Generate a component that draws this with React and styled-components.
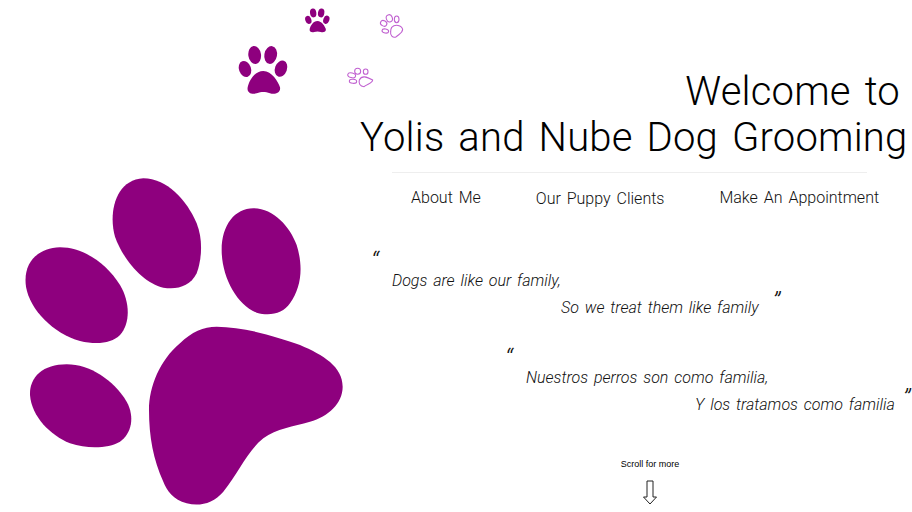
import React from "react";
import styled, { createGlobalStyle } from "styled-components";

const Global = createGlobalStyle`
  html, body { margin: 0; padding: 0; background: #fff; }
  body { font-family: "Roboto", "Liberation Sans", Arial, sans-serif; font-weight: 300; color: #000; }
`;

const Page = styled.div`
  position: relative;
  width: 912px;
  height: 512px;
  overflow: hidden;
  background: #fff;
`;

const PawLayer = styled.svg`
  position: absolute;
  inset: 0;
  width: 912px;
  height: 512px;
`;

const Content = styled.main`
  display: flex;
  flex-direction: column;
  width: 552px;
  margin-left: 360px;
  padding-top: 69px;
`;

const Title = styled.h1`
  margin: 0;
  padding-right: 12px;
  text-align: right;
  font-size: 40px;
  line-height: 46px;
  font-weight: 300;
  letter-spacing: 0.2px;
  word-spacing: 4px;
  white-space: nowrap;
`;

const Rule = styled.hr`
  width: 475px;
  height: 1px;
  margin: 11px 0 0 32px;
  border: 0;
  background: #eee;
`;

const Nav = styled.nav`
  display: flex;
  gap: 55px;
  margin: 15px 0 0 51px;
  font-size: 16px;
  line-height: 19px;
  color: #111;
  word-spacing: 2px;
`;

const NavLink = styled.a`
  transform: translateY(${(p) => (p.$low ? "1px" : "0")});
`;

const Quote = styled.blockquote`
  margin: ${(p) => p.$top}px 0 0 ${(p) => p.$left}px;
  font-style: italic;
  font-size: 16px;
  line-height: 26px;
  color: #111;
  word-spacing: 2px;
`;

const Mark = styled.span`
  display: ${(p) => (p.$open ? "block" : "inline")};
  font-size: 26px;
  line-height: ${(p) => (p.$open ? "14px" : "14px")};
  height: ${(p) => (p.$open ? "14px" : "auto")};
  margin-left: ${(p) => (p.$open ? "0" : "8px")};
  vertical-align: 3px;
`;

const Line = styled.div`
  padding-left: ${(p) => p.$indent}px;
  white-space: nowrap;
`;

const Scroll = styled.div`
  display: flex;
  flex-direction: column;
  align-items: center;
  width: 58px;
  margin: 41px 0 0 261px;
  font-family: "Liberation Sans", Arial, sans-serif;
  font-weight: 400;
  font-size: 9px;
  line-height: 11px;
  white-space: nowrap;
`;

const Arrow = styled.svg`
  width: 16px;
  height: 26px;
  margin-top: 10px;
`;

function Toes({ children }) {
  return children;
}

const solid = (
  <>
    <ellipse cx="104" cy="165" rx="19" ry="27" transform="rotate(-8 104 165)" />
    <ellipse cx="152" cy="165" rx="19" ry="27" transform="rotate(10 152 165)" />
    <ellipse cx="75" cy="207" rx="18" ry="25" transform="rotate(-20 75 207)" />
    <ellipse cx="183" cy="206" rx="18" ry="25" transform="rotate(20 183 206)" />
    <path d="M130 213C155 213 175 245 180 262C183 278 165 285 150 280C135 275 125 275 110 280C95 285 80 278 83 262C88 240 105 213 130 213Z" />
  </>
);

export default function App() {
  return (
    <Page>
      <Global />
      <PawLayer viewBox="0 0 912 512" aria-hidden="true">
        <g fill="#8e007e" transform="translate(0 160) scale(0.33333)">
          <path d="M430 55C500 55 560 120 590 190C610 240 605 300 590 340C570 380 530 390 490 383C430 370 370 300 345 230C325 160 345 60 430 55Z" />
          <path d="M760 145C820 145 870 200 890 255C910 320 905 380 870 430C850 460 810 470 770 458C710 435 665 350 665 270C665 195 705 145 760 145Z" />
          <path d="M180 262C250 262 320 310 360 375C390 425 392 490 360 525C335 550 290 555 240 543C160 520 90 450 78 380C68 310 110 265 180 262Z" />
          <path d="M200 613C270 613 340 660 380 725C405 770 395 820 360 845C325 865 265 868 210 850C150 825 95 770 90 705C88 650 130 613 200 613Z" />
          <path d="M650 500C730 500 830 530 900 555C970 585 1028 620 1028 680C1028 730 985 770 930 785C880 800 830 805 790 835C740 875 715 940 670 995C640 1030 600 1040 560 1030C520 1020 500 990 490 965C460 900 447 830 447 750C447 680 480 600 540 550C575 515 610 500 650 500Z" />
        </g>
        <g transform="translate(220 0) scale(0.33333)">
          <g fill="#8e007e">{solid}</g>
          <g fill="#8e007e" transform="translate(227.5 -43.75) scale(0.5)">{solid}</g>
          <g fill="none" stroke="#c060d0" strokeWidth="3.2">
            <ellipse cx="491" cy="70" rx="10" ry="8" transform="rotate(30 491 70)" />
            <ellipse cx="508" cy="55" rx="9" ry="11" transform="rotate(-20 508 55)" />
            <ellipse cx="530" cy="58" rx="7" ry="10" />
            <ellipse cx="496" cy="93" rx="10" ry="6" transform="rotate(10 496 93)" />
            <path d="M515 82C525 72 545 75 548 88C548 100 535 103 528 111C518 115 510 105 512 95C512 90 513 85 515 82Z" />
            <ellipse cx="395" cy="226" rx="12" ry="7" transform="rotate(15 395 226)" />
            <ellipse cx="413" cy="214" rx="9" ry="9" />
            <ellipse cx="437" cy="215" rx="7" ry="8" />
            <ellipse cx="399" cy="244" rx="11" ry="6" transform="rotate(5 399 244)" />
            <path d="M418 240C425 225 440 230 458 240C458 250 440 252 432 260C420 260 415 250 418 240Z" />
          </g>
        </g>
      </PawLayer>
      <Content>
        <Title>
          Welcome to
          <br />
          Yolis and Nube Dog Grooming
        </Title>
        <Rule />
        <Nav>
          <NavLink>About Me</NavLink>
          <NavLink $low>Our Puppy Clients</NavLink>
          <NavLink>Make An Appointment</NavLink>
        </Nav>
        <Quote $top={47} $left={11}>
          <Mark $open>“</Mark>
          <Line $indent={21}>Dogs are like our family,</Line>
          <Line $indent={190}>
            So we treat them like family <Mark>”</Mark>
          </Line>
        </Quote>
        <Quote $top={30} $left={145}>
          <Mark $open>“</Mark>
          <Line $indent={21}>Nuestros perros son como familia,</Line>
          <Line $indent={190}>
            Y los tratamos como familia<Mark>”</Mark>
          </Line>
        </Quote>
        <Scroll>
          Scroll for more
          <Arrow viewBox="0 0 16 26" aria-hidden="true">
            <path d="M5 1H11V17H14.5L8 24L1.5 17H5Z" fill="none" stroke="#222" strokeWidth="1" />
          </Arrow>
        </Scroll>
      </Content>
    </Page>
  );
}
